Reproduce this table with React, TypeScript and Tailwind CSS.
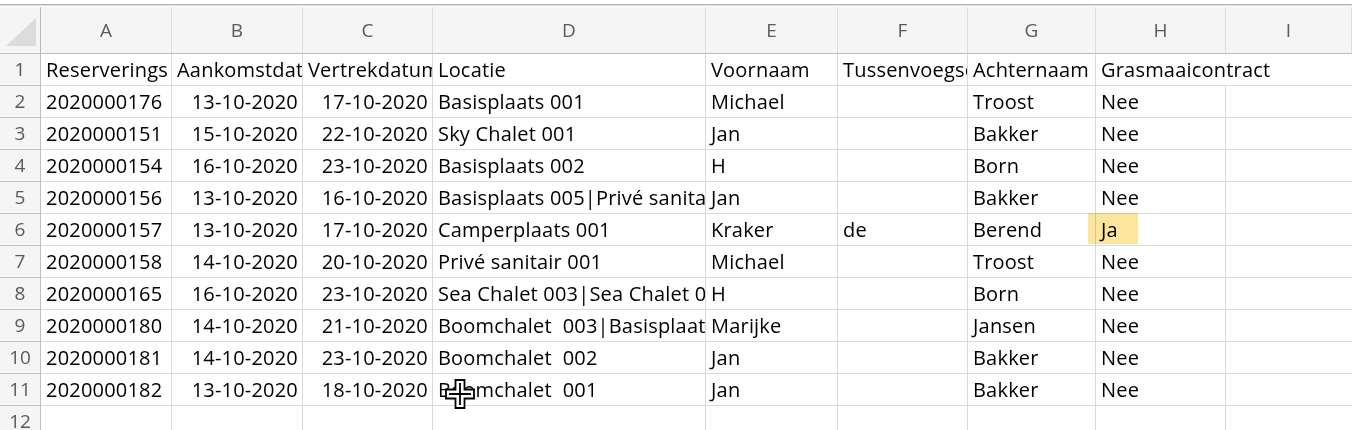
import React from "react";

const cols = ["A", "B", "C", "D", "E", "F", "G", "H", "I"];

type Row = [string, string, string, string, string, string, string, string];

const header: Row = [
  "Reserverings",
  "Aankomstdatum",
  "Vertrekdatum",
  "Locatie",
  "Voornaam",
  "Tussenvoegsel",
  "Achternaam",
  "Grasmaaicontract",
];

const rows: Row[] = [
  ["2020000176", "13-10-2020", "17-10-2020", "Basisplaats 001", "Michael", "", "Troost", "Nee"],
  ["2020000151", "15-10-2020", "22-10-2020", "Sky Chalet 001", "Jan", "", "Bakker", "Nee"],
  ["2020000154", "16-10-2020", "23-10-2020", "Basisplaats 002", "H", "", "Born", "Nee"],
  ["2020000156", "13-10-2020", "16-10-2020", "Basisplaats 005|Privé sanitair 001", "Jan", "", "Bakker", "Nee"],
  ["2020000157", "13-10-2020", "17-10-2020", "Camperplaats 001", "Kraker", "de", "Berend", "Ja"],
  ["2020000158", "14-10-2020", "20-10-2020", "Privé sanitair 001", "Michael", "", "Troost", "Nee"],
  ["2020000165", "16-10-2020", "23-10-2020", "Sea Chalet 003|Sea Chalet 004", "H", "", "Born", "Nee"],
  ["2020000180", "14-10-2020", "21-10-2020", "Boomchalet  003|Basisplaats 010", "Marijke", "", "Jansen", "Nee"],
  ["2020000181", "14-10-2020", "23-10-2020", "Boomchalet  002", "Jan", "", "Bakker", "Nee"],
  ["2020000182", "13-10-2020", "18-10-2020", "Boomchalet  001", "Jan", "", "Bakker", "Nee"],
];

const gridCols = "grid grid-cols-[41px_131px_131px_130px_273px_132px_130px_128px_130px_1fr]";

function Cursor() {
  return (
    <svg
      className="absolute left-[444px] top-[378px] z-20"
      width="32"
      height="32"
      viewBox="0 0 32 32"
    >
      <path
        d="M11.5 2 H20.5 V11.5 H30 V20.5 H20.5 V30 H11.5 V20.5 H2 V11.5 H11.5 Z"
        fill="white"
        stroke="black"
        strokeWidth="1.8"
      />
      <path d="M16 5 V27 M5 16 H27" stroke="black" strokeWidth="1.8" />
    </svg>
  );
}

export default function App() {
  return (
    <div
      className="relative w-[1352px] h-[430px] overflow-hidden bg-white text-black"
      style={{ fontFamily: "'Open Sans', 'Liberation Sans', sans-serif" }}
    >
      {/* top strip */}
      <div className="h-[7px] pt-[4px] bg-white">
        <div className="h-[2px] border-t border-b border-t-[#b3b3b3] border-b-[#dcdcdc]" />
      </div>

      {/* column header */}
      <div className={`${gridCols} h-[47px] bg-[#f5f5f5] border-b border-[#bfbfbf]`}>
        <div className="flex items-end justify-end pr-[4px] pb-[7px] border-r border-[#b8b8b8]">
          <svg width="30" height="28" viewBox="0 0 30 28">
            <path d="M30 0 V28 H0 Z" fill="#dcdcdc" />
          </svg>
        </div>
        {cols.map((c) => (
          <div
            key={c}
            className="flex items-center justify-center border-r border-[#dedede] text-[19px] text-[#5a5a5a]"
          >
            {c}
          </div>
        ))}
      </div>

      <DataRow num={1} data={header} isHeader />
      {rows.map((r, i) => (
        <DataRow key={i} num={i + 2} data={r} hl={i === 4} />
      ))}
      <DataRow num={12} data={["", "", "", "", "", "", "", ""]} />

      <Cursor />
    </div>
  );
}

function DataRow({
  num,
  data,
  isHeader,
  hl,
}: {
  num: number;
  data: Row;
  isHeader?: boolean;
  hl?: boolean;
}) {
  return (
    <div className={`${gridCols} h-[32px]`}>
      <div className="flex items-center justify-center bg-[#f5f5f5] border-r border-b border-[#bfbfbf] text-[19px] text-[#5a5a5a]">
        {num}
      </div>
      {data.map((v, ci) => {
        const isDate = !isHeader && (ci === 1 || ci === 2);
        const overflowH = isHeader && ci === 7;
        const isHl = hl && ci === 7;
        return (
          <div
            key={ci}
            className={`relative flex items-center border-b border-[#dadada] text-[20px] tracking-[0.2px] whitespace-pre ${
              overflowH ? "overflow-visible z-10" : "overflow-hidden border-r"
            } ${isDate ? "justify-end pr-[4px]" : "pl-[5px]"} ${isHl ? "overflow-visible" : ""}`}
          >
            {isHl && (
              <div className="absolute left-[-8px] top-[-1px] w-[50px] h-[31px] bg-[#f9d24f]/55 mix-blend-multiply" />
            )}
            <span className="relative">{v}</span>
          </div>
        );
      })}
      <div className="border-b border-[#dadada]" />
    </div>
  );
}
